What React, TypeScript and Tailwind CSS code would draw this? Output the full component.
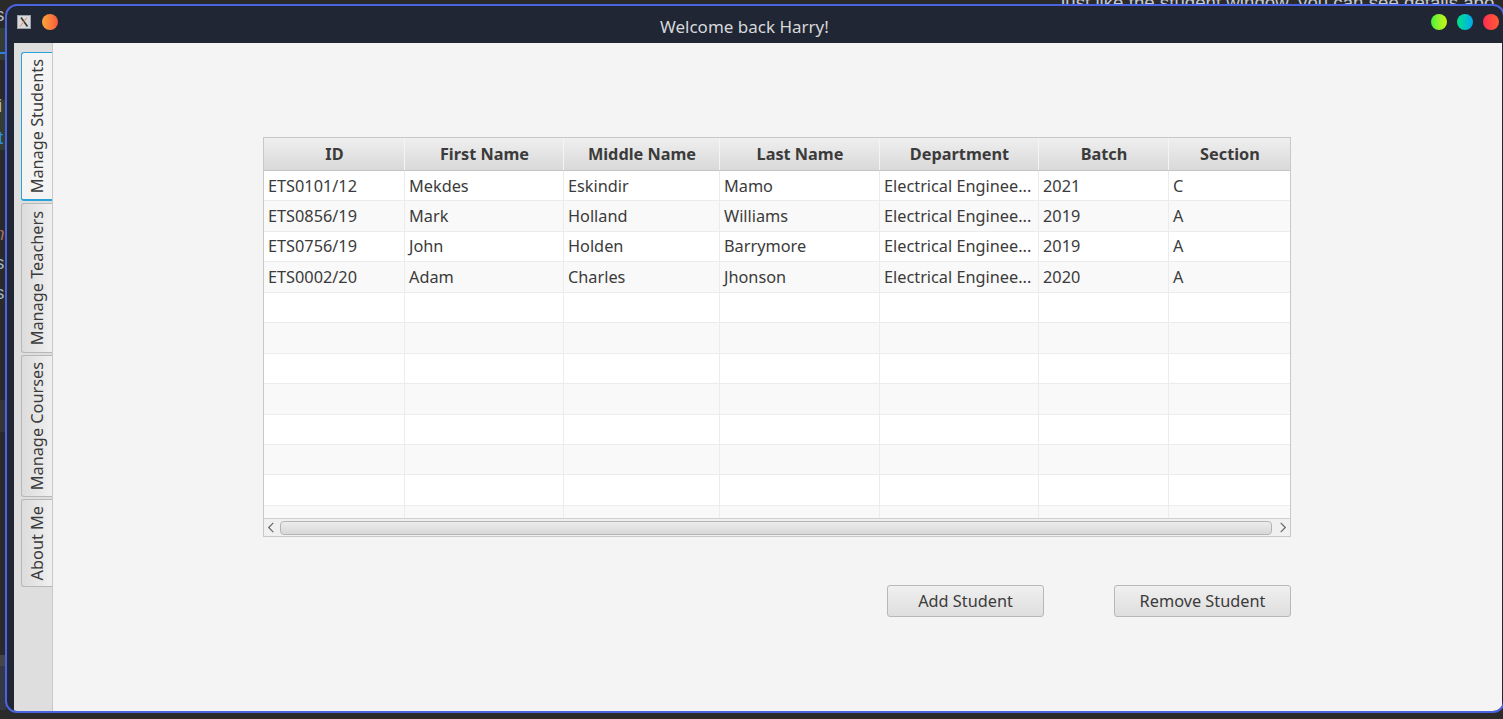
import React from 'react';

const columns = [
  { name: 'ID', width: 'w-[141px]' },
  { name: 'First Name', width: 'w-[159px]' },
  { name: 'Middle Name', width: 'w-[156px]' },
  { name: 'Last Name', width: 'w-[160px]' },
  { name: 'Department', width: 'w-[159px]' },
  { name: 'Batch', width: 'w-[130px]' },
  { name: 'Section', width: 'w-[121px]' },
];

const students = [
  ['ETS0101/12', 'Mekdes', 'Eskindir', 'Mamo', 'Electrical Enginee...', '2021', 'C'],
  ['ETS0856/19', 'Mark', 'Holland', 'Williams', 'Electrical Enginee...', '2019', 'A'],
  ['ETS0756/19', 'John', 'Holden', 'Barrymore', 'Electrical Enginee...', '2019', 'A'],
  ['ETS0002/20', 'Adam', 'Charles', 'Jhonson', 'Electrical Enginee...', '2020', 'A'],
];

const emptyRows = 7;

const tabs = [
  { label: 'Manage Students', height: 'h-[149px]', active: true },
  { label: 'Manage Teachers', height: 'h-[150px]', active: false },
  { label: 'Manage Courses', height: 'h-[142px]', active: false },
  { label: 'About Me', height: 'h-[88px]', active: false },
];

const Row: React.FC<{ cells: string[]; index: number }> = ({ cells, index }) => (
  <div className={`flex h-[30.45px] shrink-0 border-b border-[#ececec] ${index % 2 ? 'bg-[#f9f9f9]' : 'bg-white'}`}>
    {columns.map((col, i) => (
      <div key={col.name} className={`${col.width} flex items-center overflow-hidden whitespace-nowrap border-r border-[#ececec] pl-1 last:border-r-0`}>
        {cells[i]}
      </div>
    ))}
  </div>
);

const Button: React.FC<{ label: string; width: string }> = ({ label, width }) => (
  <button className={`${width} h-[32px] rounded-[3px] border border-[#b8b8b8] bg-gradient-to-b from-[#f0f0f0] to-[#dedede] pt-[1px] text-[16.3px] text-[#3b3b3b]`}>
    {label}
  </button>
);

// bits of the window lying behind this one
const Backdrop: React.FC = () => (
  <div className="font-['Liberation_Sans',sans-serif] text-[18.7px]">
    <div className="absolute left-0 top-[28px] h-[32px] w-[6px] bg-[#333d33]" />
    <div className="absolute left-0 top-[52px] h-[2px] w-[6px] bg-[#2f80d8]" />
    <div className="absolute left-0 top-[100px] h-[50px] w-[6px] bg-[#333d33]" />
    <div className="absolute left-0 top-[400px] h-[32px] w-[6px] bg-[#363636]" />
    <div className="absolute left-0 top-[655px] h-[11px] w-[6px] bg-[#464646]" />
    <div className="absolute left-0 top-[666px] h-[44px] w-[6px] bg-[#343844]" />
    <span className="absolute left-[-5px] top-[1px] text-[#b8bcc4]">s</span>
    <span className="absolute left-[-2px] top-[92px] text-[#b8bcc4]">i</span>
    <span className="absolute left-[-2px] top-[124px] text-[#2f8fe8]">t</span>
    <span className="absolute left-[-11px] top-[220px] italic text-[#a86a60]">m</span>
    <span className="absolute left-[-5px] top-[249px] text-[#9fb4c8]">s</span>
    <span className="absolute left-[-5px] top-[279px] text-[#9fb4c8]">s</span>
    <div className="absolute left-[1056px] top-[-11px] whitespace-nowrap text-[#c5cbd6]">
      Just like the student window, you can see details abo
    </div>
  </div>
);

const App: React.FC = () => {
  return (
    <div className="relative h-[719px] w-[1503px] overflow-hidden bg-[#2a2a2a] pl-[5px] pt-[4px] font-['Noto_Sans',sans-serif] text-[16.3px] text-[#3b3b3b]">
      <Backdrop />

      <div className="relative flex h-[709px] w-[1500px] flex-col overflow-hidden rounded-[12px] border-2 border-[#4a63e0] bg-[#202633]">
        {/* title bar */}
        <div className="relative flex h-[37px] shrink-0 items-start pl-[10px] pt-[8px]">
          <div className="mt-[1px] flex h-[14px] w-[14px] items-center justify-center border border-[#9aa0a8] bg-[#d5d8dc]">
            <svg viewBox="0 0 12 12" className="h-[12px] w-[12px]">
              <path d="M3 1.5 L9.5 10.5" stroke="#333" strokeWidth="1.6" />
              <path d="M9 1.5 L2 10.5" stroke="#e8844a" strokeWidth="1" />
            </svg>
          </div>
          <div className="ml-[11px] h-4 w-4 rounded-full bg-gradient-to-r from-[#f7a53a] to-[#f9563b]" />
          <div className="absolute left-[653px] top-[8px] text-[17px] text-[#d6d8dc]">Welcome back Harry!</div>
          <div className="absolute left-[1424px] top-[8px] flex gap-[10px]">
            <div className="h-4 w-4 rounded-full bg-gradient-to-r from-[#3cf03c] to-[#c8f500]" />
            <div className="h-4 w-4 rounded-full bg-gradient-to-r from-[#00e080] to-[#00a8f0]" />
            <div className="h-4 w-4 rounded-full bg-gradient-to-r from-[#ff2a50] to-[#ff5a30]" />
          </div>
        </div>

        <div className="ml-[7px] flex h-[668px] w-[1488px] shrink-0">
          {/* side tabs */}
          <div className="flex w-[39px] shrink-0 flex-col items-end gap-[2px] border-r border-[#c8c8c8] bg-[#dedede] pt-[9px]">
            {tabs.map(tab => (
              <div
                key={tab.label}
                className={`flex w-[31px] items-center justify-center rounded-l-[3px] border border-r-0 ${tab.height} ${
                  tab.active
                    ? 'border-b-2 border-[#2aa3d8] bg-[#f4f4f4]'
                    : 'border-[#b8b8b8] bg-gradient-to-r from-[#dcdcdc] to-[#f0f0f0]'
                }`}
              >
                <span className="rotate-180 whitespace-nowrap [writing-mode:vertical-rl]">{tab.label}</span>
              </div>
            ))}
          </div>

          {/* main pane */}
          <div className="flex flex-1 flex-col bg-[#f4f4f4] pl-[210px] pt-[94px]">
            <div className="flex h-[400px] w-[1028px] flex-col border border-[#c8c8c8] bg-white">
              <div className="flex h-[33px] shrink-0 border-b border-[#c4c4c4] bg-gradient-to-b from-[#efefef] to-[#d9d9d9]">
                {columns.map(col => (
                  <div key={col.name} className={`${col.width} flex items-center justify-center border-r border-[#f4f4f4] pl-[1px] font-bold last:border-r-0`}>
                    {col.name}
                  </div>
                ))}
              </div>
              <div className="flex flex-1 flex-col overflow-hidden">
                {students.map((s, i) => (
                  <Row key={s[0]} cells={s} index={i} />
                ))}
                {Array.from({ length: emptyRows + 1 }).map((_, i) => (
                  <Row key={i} cells={[]} index={i + students.length} />
                ))}
              </div>
              <div className="flex h-[18px] shrink-0 items-center border-t border-[#d0d0d0] bg-[#f0f0f0]">
                <svg viewBox="0 0 8 12" className="ml-[3px] h-[11px] w-[8px]">
                  <path d="M6.5 1 L1.5 6 L6.5 11" fill="none" stroke="#666" strokeWidth="1.3" />
                </svg>
                <div className="ml-[5px] h-[14px] flex-1 rounded-[4px] border border-[#b4b4b4] bg-gradient-to-b from-[#ececec] to-[#d8d8d8]" />
                <svg viewBox="0 0 8 12" className="ml-[7px] mr-[3px] h-[11px] w-[8px]">
                  <path d="M1.5 1 L6.5 6 L1.5 11" fill="none" stroke="#666" strokeWidth="1.3" />
                </svg>
              </div>
            </div>

            <div className="mt-[48px] flex w-[1028px] justify-end gap-[70px]">
              <Button label="Add Student" width="w-[157px]" />
              <Button label="Remove Student" width="w-[177px]" />
            </div>
          </div>
        </div>
      </div>
    </div>
  );
};

export default App;
